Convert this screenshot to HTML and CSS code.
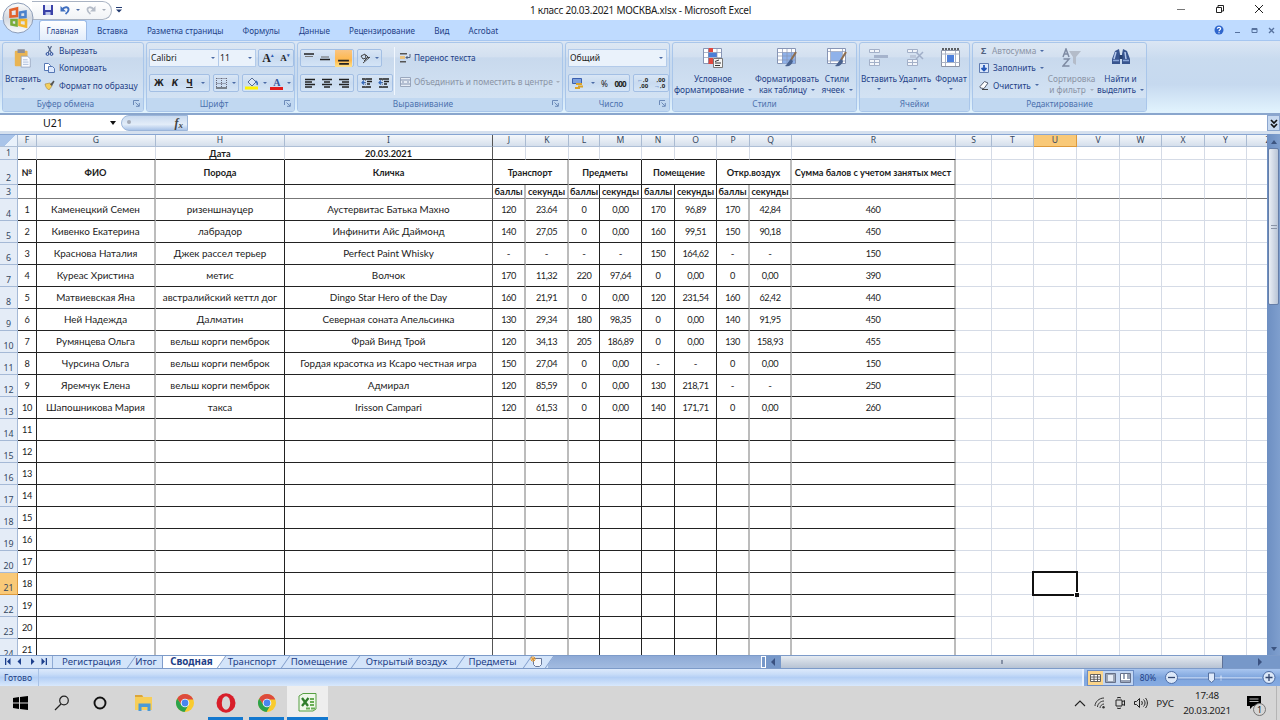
FILE: index.html
```html
<!DOCTYPE html>
<html lang="ru">

<head>
  <meta charset="utf-8">
  <title>1 класс 20.03.2021 МОСКВА.xlsx - Microsoft Excel</title>
  <link rel="stylesheet" href="styles.css">
</head>

<body>
  <svg class="defs" width="0" height="0">
    <symbol id="align-left" viewBox="0 0 12 12"><path d="M1 2.5h10M1 5h7M1 7.5h10M1 10h7" stroke="#222" stroke-width="1.5" /></symbol>
    <symbol id="align-center" viewBox="0 0 12 12"><path d="M1 2.5h10M3 5h6M1 7.5h10M3 10h6" stroke="#222" stroke-width="1.5" /></symbol>
    <symbol id="align-right" viewBox="0 0 12 12"><path d="M1 2.5h10M4 5h7M1 7.5h10M4 10h7" stroke="#222" stroke-width="1.5" /></symbol>
    <symbol id="indent" viewBox="0 0 12 12"><path d="M1 2h10M6 4.5h5M6 7h3M1 10h9" stroke="#222" stroke-width="1.3" /><path d="M5 5.7H1M3 3.5L1 5.7l2 2" stroke="#3668b8" stroke-width="1.2" fill="none" /><path d="M4.500 1v10" stroke="#777" stroke-dasharray="1 1" stroke-width=".8" /></symbol>
    <symbol id="launch" viewBox="0 0 7 7"><path d="M.5 5V.5H6M2.500 2.500L6 6M6.300 3v3.300H3" stroke="#6c8ab8" fill="none" /></symbol>
    <symbol id="chrome" viewBox="0 0 20 20">
      <circle cx="10" cy="10" r="9" fill="#f9cb2e" />
      <path d="M2.200 5.500A9 9 0 0 1 17.800 5.500L18.200 6.500H10L6.500 12z" fill="#dd4b3e" />
      <path d="M2.200 5.500A9 9 0 0 0 9.500 19L13.500 12 6.500 12z" fill="#2ba24c" />
      <circle cx="10" cy="10" r="4.300" fill="#fff" />
      <circle cx="10" cy="10" r="3.400" fill="#4a86ee" />
    </symbol>
  </svg>

  <header class="titlebar">
    <div class="quick">
      <svg width="12" height="12" viewBox="0 0 12 12"><path d="M1 1h10v10H1z" fill="#3a41a8" /><path d="M3 1h6v5H3z" fill="#e8ecfa" /><path d="M3.500 8h5v3h-5z" fill="#b9c2e8" /></svg>
      <svg width="10" height="10" viewBox="0 0 10 10"><path d="M2 4.500C5 1 9 2 8.500 5 8.300 7 7 8 5.500 9" stroke="#3f6fc0" stroke-width="2" fill="none" /><path d="M.5 1v5.500H6z" fill="#3f6fc0" /></svg>
      <i class="caret"></i>
      <svg width="10" height="10" viewBox="0 0 10 10"><path d="M8 4.500C5 1 1 2 1.500 5 1.700 7 3 8 4.500 9" stroke="#b5bcc8" stroke-width="1.800" fill="none" /><path d="M9.500 1v5.500H4z" fill="#b5bcc8" /></svg>
      <i class="caret pale"></i>
    </div>
    <svg class="more" width="6" height="6" viewBox="0 0 6 6"><path d="M0 .5h6" stroke="#223a70" /><path d="M0 2.500h6L3 5.500z" fill="#223a70" /></svg>
    <h1>1 класс 20.03.2021 МОСКВА.xlsx - Microsoft Excel</h1>
    <div class="window-buttons">
      <svg width="10" height="10" viewBox="0 0 10 10"><path d="M1 5.500h8" stroke="#777" /></svg>
      <svg width="10" height="10" viewBox="0 0 10 10"><path d="M1.500 3.500h5v5h-5zM3 3V1.500h5.500V7H7" stroke="#222" fill="none" /></svg>
      <svg width="10" height="10" viewBox="0 0 10 10"><path d="M1 1l8 8M9 1L1 9" stroke="#222" /></svg>
    </div>
  </header>

  <div class="office-button">
    <svg width="32" height="32" viewBox="0 0 32 32">
      <defs>
        <linearGradient id="orb" x1="0" y1="0" x2="0" y2="1">
          <stop offset="0" stop-color="#fdfdfd" /><stop offset=".5" stop-color="#d3d8e0" /><stop offset="1" stop-color="#fafcff" />
        </linearGradient>
      </defs>
      <circle cx="16" cy="16" r="15" fill="url(#orb)" stroke="#8d9db8" />
      <g fill="none" stroke-width="2.600">
        <path d="M8.500 8l6.500-1.500v7.500l-6.500.5z" stroke="#e2622c" />
        <path d="M18 10.500l5.500-1v5.500l-5.500.5z" stroke="#4c82cc" />
        <path d="M9.500 18l5 0v5.500l-5-1z" stroke="#79ac3a" />
        <path d="M17.500 18h6.500v6.500l-6.500-1.500z" stroke="#f3b52a" />
      </g>
    </svg>
  </div>

  <nav class="menu">
    <a class="active">Главная</a><a>Вставка</a><a>Разметка страницы</a><a>Формулы</a><a>Данные</a><a>Рецензирование</a><a>Вид</a><a>Acrobat</a>
    <div class="book-buttons">
      <svg width="10" height="10" viewBox="0 0 10 10"><circle cx="5" cy="5" r="4.500" fill="#2f66cd" /><path d="M3.300 3.800C3.500 1.800 6.700 2 6.600 3.800 6.500 4.800 5 4.800 5 6.200M5 7.200v1" stroke="#fff" stroke-width="1.200" fill="none" /></svg>
      <svg width="7" height="7" viewBox="0 0 7 7"><path d="M1 5.500h5" stroke="#57729e" /></svg>
      <svg width="7" height="7" viewBox="0 0 7 7"><path d="M1 1.500h5v4H1zM1 2.500h5" stroke="#57729e" fill="none" /></svg>
      <svg width="7" height="7" viewBox="0 0 7 7"><path d="M1 1l5 5M6 1L1 6" stroke="#57729e" stroke-width="1.300" /></svg>
    </div>
  </nav>

  <section class="ribbon">
    <div class="group clipboard">
      <div class="body">
        <button class="big">
          <svg width="20" height="22" viewBox="0 0 20 22"><rect x="1" y="3" width="14" height="17" rx="1" fill="#e9b452" /><path d="M4 1.500h8v4H4z" fill="#8c8e98" /><path d="M8 9h7l3 3v9H8z" fill="#f7faff" stroke="#8d9cb8" stroke-width=".8" /><path d="M10 13h5M10 15.500h6M10 18h6" stroke="#94a9cf" stroke-width=".8" /></svg>
          <span>Вставить</span><i class="caret"></i>
        </button>
        <div class="list">
          <button><svg width="11" height="10" viewBox="0 0 11 10"><path d="M4 0l3.500 7M7.500 0L4 7" stroke="#56688c" stroke-width="1.200" /><circle cx="3.500" cy="8" r="1.400" fill="none" stroke="#294a9a" /><circle cx="7.500" cy="8" r="1.400" fill="none" stroke="#294a9a" /></svg>Вырезать</button>
          <button><svg width="11" height="10" viewBox="0 0 11 10"><path d="M.5.500h4l2 2v5h-6z" fill="#fff" stroke="#5577b5" /><path d="M4.500 3.500h4l2 2v4h-6z" fill="#dbe7fb" stroke="#5577b5" /></svg>Копировать</button>
          <button><svg width="11" height="10" viewBox="0 0 11 10"><path d="M1 4l5-1 2 3-3 4C3 9 1.500 7 1 4z" fill="#f2cf5e" stroke="#a9853a" stroke-width=".6" /><path d="M6 4.500L9.500.5l1 1L8 6z" fill="#555" /></svg>Формат по образцу</button>
        </div>
      </div>
      <footer>Буфер обмена<svg><use href="#launch" /></svg></footer>
    </div>

    <div class="group font">
      <div class="body rows">
        <div class="line">
          <div class="combo name">Calibri<i class="caret"></i></div>
          <div class="combo size">11<i class="caret"></i></div>
          <div class="set grow"><b class="serif">A<sup>▴</sup></b><b class="serif small">A<sup>▾</sup></b></div>
        </div>
        <div class="line">
          <div class="set style"><b>Ж</b><b class="it">К</b><b class="un">Ч</b><i class="caret"></i></div>
          <div class="set borders"><svg width="11" height="11" viewBox="0 0 11 11"><path d="M.5.500h10M.5 5.500h10M.5 0v9M5.500 0v9M10.500 0v9" stroke="#667" stroke-dasharray="1 1" /><path d="M0 10h11" stroke="#222" /></svg><i class="caret"></i></div>
          <div class="set colors">
            <svg width="14" height="13" viewBox="0 0 14 13"><path d="M3 5l4-4 4 4-4 4z" fill="#dce7f6" stroke="#556b94" /><path d="M10.500 4c2 1 2 3 1.500 4" stroke="#3668b8" stroke-width="1.500" fill="none" /><path d="M0 9.500h13v3H0z" fill="#fff200" /></svg><i class="caret"></i>
            <span class="letter">A</span><i class="caret"></i>
          </div>
        </div>
      </div>
      <footer>Шрифт<svg><use href="#launch" /></svg></footer>
    </div>

    <div class="group align">
      <div class="body">
        <div class="rows left">
          <div class="line">
            <div class="set three">
              <svg width="12" height="12" viewBox="0 0 12 12"><path d="M1 2h10" stroke="#222" stroke-width="1.500" /><path d="M2 4.500h8" stroke="#777" /></svg>
              <svg width="12" height="12" viewBox="0 0 12 12"><path d="M2 5h8" stroke="#666" /><path d="M1 7.500h10" stroke="#222" stroke-width="1.500" /></svg>
              <svg class="on" width="12" height="12" viewBox="0 0 12 12"><path d="M1 8h10M2 11h9" stroke="#222" stroke-width="1.500" /></svg>
            </div>
            <div class="set turn"><svg width="12" height="12" viewBox="0 0 12 12"><path d="M1 4l4-2 1 4-3 1zM4 9l4-4M6 3l3 3M3 11l7-6" stroke="#444" fill="none" /></svg><i class="caret"></i></div>
          </div>
          <div class="line">
            <div class="set three">
              <svg width="12" height="12"><use href="#align-left" /></svg>
              <svg width="12" height="12"><use href="#align-center" /></svg>
              <svg width="12" height="12"><use href="#align-right" /></svg>
            </div>
            <div class="set two">
              <svg width="12" height="12"><use href="#indent" /></svg>
              <svg width="12" height="12"><use href="#indent" /></svg>
            </div>
          </div>
        </div>
        <div class="wrap">
          <button><svg width="11" height="10" viewBox="0 0 11 10"><path d="M0 .7h7M0 8.700h6" stroke="#555" stroke-width="1.400" /><path d="M0 3h5v3H0z" fill="#eac27e" /><path d="M6 4.500h4V1M7.500 3L6 4.500 7.500 6" stroke="#4f607e" fill="none" /></svg>Перенос текста</button>
          <button class="off"><svg width="11" height="10" viewBox="0 0 11 10"><path d="M.5.500h10v9H.5z" fill="#e6ecf5" stroke="#9aa7bd" /><path d="M.5 3h10M.5 7h10M2 5h2M7 5h2" stroke="#8393b0" /></svg>Объединить и поместить в центре<i class="caret pale"></i></button>
        </div>
      </div>
      <footer>Выравнивание<svg><use href="#launch" /></svg></footer>
    </div>

    <div class="group number">
      <div class="body rows">
        <div class="line"><div class="combo">Общий<i class="caret"></i></div></div>
        <div class="line">
          <div class="set money"><svg width="12" height="11" viewBox="0 0 12 11"><path d="M.5.500h9v5h-9z" fill="#7ea0dd" stroke="#3b5fae" /><path d="M4 6h6M6 8.500h5M3 10h5" stroke="#dba32b" stroke-width="1.800" /></svg><i class="caret"></i><span>%</span><span class="thousands">000</span></div>
          <div class="set digits"><span><i>←</i>,0<br>,00</span><span>,00<br><i>→</i>,0</span></div>
        </div>
      </div>
      <footer>Число<svg><use href="#launch" /></svg></footer>
    </div>

    <div class="group styles">
      <div class="body">
        <button class="big">
          <svg width="20" height="20" viewBox="0 0 20 20"><path d="M.5.500h18v15H.5z" fill="#fff" stroke="#8795b5" /><path d="M5 0h5v4H5zM5 10h5v6H5z" fill="#e0473e" /><path d="M5 4.500h9v4.500H5z" fill="#4a7ed8" /><path d="M.5 4.500h18M.5 9.500h18M5.500 0v15.500M14 0v15.500" stroke="#8795b5" stroke-width=".7" /><path d="M10.500 10.500h9v9h-9z" fill="#f5f5f5" stroke="#777" /><path d="M12 13.500l4-1.500M12 15h6M12 17.500h5" stroke="#333" /></svg>
          <span>Условное</span><span>форматирование<i class="caret"></i></span>
        </button>
        <button class="big">
          <svg width="20" height="20" viewBox="0 0 20 20"><path d="M.5.500h18v15H.5z" fill="#fff" stroke="#8795b5" /><path d="M5 4.500h13v11H5z" fill="#8fb2ea" /><path d="M.5 4.500h18M.5 8h18M.5 12h18M5.500 0v15.500M10 0v15.500M14.500 0v15.500" stroke="#8795b5" stroke-width=".7" /><path d="M19 4l-5 8" stroke="#8e6e4e" stroke-width="2" /><path d="M14 11l2 2c-1 4-4 6-8 5 3-2 3-5 6-7z" fill="#49628e" /></svg>
          <span>Форматировать</span><span>как таблицу<i class="caret"></i></span>
        </button>
        <button class="big">
          <svg width="20" height="20" viewBox="0 0 20 20"><path d="M.5.500h18v15H.5z" fill="#fff" stroke="#8795b5" /><path d="M4 4h11v9H4z" fill="#8fb2ea" /><path d="M.5 3.500h18M.5 13h18M3.500 0v15.500M15.500 0v15.500" stroke="#8795b5" stroke-width=".7" /><path d="M19 4l-5 8" stroke="#8e6e4e" stroke-width="2" /><path d="M14 11l2 2c-1 4-4 6-8 5 3-2 3-5 6-7z" fill="#49628e" /></svg>
          <span>Стили</span><span>ячеек<i class="caret"></i></span>
        </button>
      </div>
      <footer>Стили</footer>
    </div>

    <div class="group cells">
      <div class="body">
        <button class="big">
          <svg width="20" height="20" viewBox="0 0 20 20"><path d="M.5 1.500h10v3H.5zM.5 11.500h10v6H.5zM.5 14.500h10M5.500 1.500v3M5.500 11.500v6" fill="#f2f5fa" stroke="#a3b0c8" /><path d="M5 7h14v3H5z" fill="#a5b3cc" /></svg>
          <span>Вставить</span><i class="caret"></i>
        </button>
        <button class="big">
          <svg width="20" height="20" viewBox="0 0 20 20"><path d="M2.500 1.500h10v3h-10zM2.500 11.500h10v6h-10zM2.500 14.500h10M7.500 1.500v3M7.500 11.500v6" fill="#f2f5fa" stroke="#a3b0c8" /><path d="M5 7h6v3H5z" fill="#bcc7da" /><path d="M11 4l7 7M18 4l-7 7" stroke="#a0aec8" stroke-width="1.500" /></svg>
          <span>Удалить</span><i class="caret"></i>
        </button>
        <button class="big">
          <svg width="22" height="20" viewBox="0 0 22 20"><path d="M1.500 2.500h18v16h-18z" fill="#fff" stroke="#8b93a5" /><path d="M2 1h17" stroke="#333" stroke-width="1.500" stroke-dasharray="2 1" /><path d="M1.500 6h18M1.500 14.500h18M5.500 3v15M15.500 3v15" stroke="#aab3c6" /><path d="M7 7h7v7H7z" fill="#4d80dc" /></svg>
          <span>Формат</span><i class="caret"></i>
        </button>
      </div>
      <footer>Ячейки</footer>
    </div>

    <div class="group edit">
      <div class="body">
        <div class="list">
          <button class="off"><b class="sigma">Σ</b>Автосумма<i class="caret"></i></button>
          <button><svg width="10" height="10" viewBox="0 0 10 10"><path d="M.5.500h9v9h-9z" fill="#dce8fb" stroke="#5f7bb0" /><path d="M5 2v5M2.500 5L5 7.500 7.500 5" stroke="#2457b8" stroke-width="1.800" fill="none" /></svg>Заполнить<i class="caret"></i></button>
          <button><svg width="10" height="10" viewBox="0 0 10 10"><path d="M1 6.500L5.500 1.500 9 3 5 8.500 1.500 8z" fill="#fff" stroke="#555e70" /><path d="M3 9.500h6" stroke="#444" /></svg>Очистить<i class="caret"></i></button>
        </div>
        <button class="big off">
          <svg width="20" height="20" viewBox="0 0 20 20"><path d="M7 3h12l-5 6v8l-3-2V9z" fill="#b4bcc9" /><path d="M1 9l3-8 3 8M2 6h4M1.500 11h5.500l-6 7h6.500" stroke="#7e8ba3" stroke-width="1.500" fill="none" /></svg>
          <span>Сортировка</span><span>и фильтр<i class="caret pale"></i></span>
        </button>
        <button class="big">
          <svg width="20" height="20" viewBox="0 0 20 20"><path d="M4 3l4-2 1 5v10H1v-5zM16 3l-4-2-1 5v10h8v-5z" fill="#38558f" /><path d="M8.500 7h3v4h-3z" fill="#27406f" /><path d="M5 4L3 11M14 4l1 7" stroke="#b4c8ec" stroke-width="1.500" /><path d="M2 12.500h6M12 12.500h6" stroke="#8aa6d8" stroke-width="1.500" /></svg>
          <span>Найти и</span><span>выделить<i class="caret"></i></span>
        </button>
      </div>
      <footer>Редактирование</footer>
    </div>
  </section>

  <div class="formula">
    <div class="name-box">U21<i class="caret"></i></div>
    <div class="fx"><span class="dot"></span><i>f<sub>x</sub></i></div>
    <div class="expand"><svg width="8" height="10" viewBox="0 0 8 10"><path d="M1 1l3 3 3-3M1 5l3 3 3-3" stroke="#111" stroke-width="1.700" fill="none" /></svg></div>
  </div>

  <main class="sheet">
    <div class="viewport">
      <table id="grid"></table>
      <div class="cursor"></div>
    </div>
    <div class="vscroll">
      <i class="up"></i>
      <div class="thumb"></div>
      <i class="down"></i>
    </div>
  </main>

  <div class="tabs">
    <div class="nav">
      <svg width="7" height="7" viewBox="0 0 7 7"><path d="M1 0h1.300v7H1zM6.500 0v7L3 3.500z" /></svg>
      <svg width="7" height="7" viewBox="0 0 7 7"><path d="M5 0v7L1.500 3.500z" /></svg>
      <svg width="7" height="7" viewBox="0 0 7 7"><path d="M2 0v7l3.500-3.500z" /></svg>
      <svg width="7" height="7" viewBox="0 0 7 7"><path d="M4.700 0H6v7H4.700zM.5 0v7L4 3.500z" /></svg>
    </div>
    <a class="t1"><span>Регистрация</span></a><a class="t2"><span>Итог</span></a><a class="t3 current"><span>Сводная</span></a><a class="t4"><span>Транспорт</span></a><a class="t5"><span>Помещение</span></a><a class="t6"><span>Открытый воздух</span></a><a class="t7"><span>Предметы</span></a>
    <a class="t8"><svg width="13" height="11" viewBox="0 0 13 11"><path d="M3.500 2.500h8v6l-2 2h-4l-2-2z" fill="#f4f7fc" stroke="#67779a" /><path d="M3 0v6M0 3h6M1 1l4 4M5 1L1 5" stroke="#e8992c" /></svg></a>
    <div class="hscroll">
      <div class="split"></div>
      <i class="left"></i>
      <div class="thumb"></div>
      <i class="right"></i>
    </div>
  </div>

  <div class="status">
    <span class="ready">Готово</span>
    <div class="tools">
      <div class="views">
        <svg class="on" width="15" height="14" viewBox="0 0 15 14"><path d="M2.500 3.500h10v7h-10zM2.500 6h10M2.500 8.300h10M6 3.500v7M9.500 3.500v7" fill="#fff" stroke="#555" stroke-width=".9" /></svg>
        <svg width="15" height="14" viewBox="0 0 15 14"><path d="M2.500 2.500h10v9h-10z" fill="#9ca5b5" stroke="#66718a" /><path d="M5 4h5v6H5z" fill="#e5ebf5" /></svg>
        <svg width="15" height="14" viewBox="0 0 15 14"><path d="M2.500 2.500h10v9h-10z" fill="#fff" stroke="#66718a" /><path d="M5 3h2v5H5zM9 3h3v5H9zM3 9h9v2H3z" fill="#9aa4b8" /></svg>
      </div>
      <span class="percent">80%</span>
      <svg class="zoom" width="114" height="16" viewBox="0 0 114 16">
        <path d="M14 8h84M57 5.500v5" stroke="#e9f1ff" />
        <path d="M14 9h84" stroke="#5878b5" stroke-width=".6" />
        <circle cx="7.500" cy="7.500" r="6" fill="#dce8f8" stroke="#4c6ca5" /><path d="M4 7.500h7" stroke="#33466e" stroke-width="1.300" />
        <circle cx="105" cy="7.500" r="6" fill="#dce8f8" stroke="#4c6ca5" /><path d="M101.500 7.500h7M105 4v7" stroke="#33466e" stroke-width="1.300" />
        <path d="M44.500 3h6v7l-3 2.500-3-2.500z" fill="#dfeafa" stroke="#55709f" />
      </svg>
    </div>
  </div>

  <div class="taskbar">
    <div class="apps">
      <a><svg width="15" height="14" viewBox="0 0 15 14"><path d="M0 2l6-.9v5.500H0zM7 1l8-1v6.600H7zM0 7.400h6v5.500L0 12zM7 7.400h8V14l-8-1z" /></svg></a>
      <a><svg width="16" height="16" viewBox="0 0 16 16"><circle cx="10" cy="5.500" r="4.300" fill="none" stroke="#222" stroke-width="1.200" /><path d="M7 9l-6 6" stroke="#222" stroke-width="1.300" /></svg></a>
      <a class="cortana"><svg width="14" height="14" viewBox="0 0 14 14"><circle cx="7" cy="7" r="5.500" fill="none" stroke="#111" stroke-width="1.900" /></svg></a>
      <a><svg width="20" height="18" viewBox="0 0 20 18"><path d="M1 1h7l1.500 2H18v13H1z" fill="#f7ce58" /><path d="M1 1h7l1 2H1z" fill="#dba53a" /><path d="M4.500 17V9.500h12V17h-3v-4h-6v4z" fill="#4a9ad6" /></svg></a>
      <a><svg width="20" height="20"><use href="#chrome" /></svg></a>
      <a class="open"><svg width="20" height="20" viewBox="0 0 20 20"><ellipse cx="10" cy="10" rx="9.500" ry="9.700" fill="#d81e2a" /><ellipse cx="10" cy="10" rx="4.200" ry="6.700" fill="#d6d6d6" /></svg></a>
      <a class="open"><svg width="20" height="20"><use href="#chrome" /></svg></a>
      <a class="open front"><svg width="20" height="19" viewBox="0 0 20 19"><path d="M1 3l4-2.500h13V16l-3 2H1z" fill="#eef7ea" stroke="#57a043" /><path d="M4 5l6 8M10.500 5L4 13" stroke="#2f7d2b" stroke-width="2.300" /><path d="M12 6h5M12 9h5M12 12h5M8 15.500h9" stroke="#69ae55" stroke-width="1.800" stroke-dasharray="4 1" /></svg></a>
    </div>
    <div class="tray">
      <svg width="12" height="8" viewBox="0 0 12 8"><path d="M1 7l5-5 5 5" stroke="#222" stroke-width="1.100" fill="none" /></svg>
      <svg width="12" height="12" viewBox="0 0 12 12"><path d="M1 9C1 5 5 1 10 1M3.500 10C3.500 7 6.500 4 10 4M6 11c0-2 2-4 4-4" stroke="#333" fill="none" /><circle cx="9.500" cy="10.300" r="1.200" fill="#333" /></svg>
      <svg width="12" height="12" viewBox="0 0 12 12"><path d="M2 3h6v6H2zM8 5l2.500-1.500v5L8 7M3 1c1-.7 3-.7 4 0M3 11c1 .7 3 .7 4 0" stroke="#222" fill="none" /></svg>
      <svg width="14" height="12" viewBox="0 0 14 12"><path d="M.5 4.500h2l3-3v9l-3-3h-2zM7.500 4c1 1 1 3 0 4M9.500 2.500c2 2 2 5 0 7M11.500 1c2.500 3 2.500 7 0 10" stroke="#222" fill="none" /></svg>
      <span class="lang">РУС</span>
      <div class="clock"><span>17:48</span><span>20.03.2021</span></div>
      <div class="notify">
        <svg width="14" height="13" viewBox="0 0 14 13"><path d="M0 0h14v10H6l-3 3v-3H0z" /><path d="M2.500 3h9M2.500 5.500h9" stroke="#ccc" stroke-width=".9" /></svg>
        <span>1</span>
      </div>
    </div>
  </div>

  <script src="grid.js"></script>
</body>

</html>
```
FILE: styles.css
```css
:root {
  --text: #1e3f87;
  --grid: #d5dbe6;
  --soft: #bcbcbc;
  --ui: "Noto Sans", "Open Sans", sans-serif;
  --cell: Lato, "Open Sans", sans-serif;
}

* {
  box-sizing: border-box;
}

body {
  width: 1280px;
  height: 720px;
  margin: 0;
  overflow: hidden;
  position: relative;
  display: flex;
  flex-direction: column;
  background: #fff;
  font: 8.3px/11px var(--ui);
  color: var(--text);
}

svg {
  display: block;
  flex: none;
}

.defs {
  position: absolute;
}

button {
  border: 0;
  padding: 0;
  background: none;
  font: inherit;
  color: inherit;
  white-space: nowrap;
}

.caret {
  flex: none;
  width: 0;
  height: 0;
  border: 2px solid transparent;
  border-top: 2.5px solid #4b6ba5;
  border-bottom: 0;
}

.caret.pale {
  border-top-color: #a6adb9;
}

/* title */
.titlebar {
  height: 20px;
  display: flex;
  align-items: center;
  position: relative;
}

.quick {
  width: 80px;
  height: 19px;
  margin-left: 32px;
  padding-left: 10px;
  display: flex;
  align-items: center;
  gap: 6px;
  border: 1px solid #a9b3c3;
  border-left: 0;
  border-radius: 0 10px 10px 0;
  background: linear-gradient(#fff, #f1f3f6);
}

.more {
  margin-left: 4px;
}

.titlebar h1 {
  width: 221px;
  margin: 0 0 0 408px;
  font: 10px/20px var(--ui);
  letter-spacing: -0.25px;
  color: #1c1c1c;
  white-space: nowrap;
}

.window-buttons {
  margin: 0 16px 2px auto;
  display: flex;
  gap: 29px;
}

.office-button {
  position: absolute;
  left: 2px;
  top: 2px;
}

/* menu */
.menu {
  height: 20px;
  padding-left: 39px;
  display: flex;
  background: #bfdbff;
  font-size: 8.1px;
}

.menu a {
  height: 20px;
  padding: 0 8px;
  margin-right: 3.2px;
  line-height: 22px;
  white-space: nowrap;
}

.menu .active {
  width: 48px;
  padding: 0 6.5px;
  margin-right: 2px;
  border: 1px solid #9dbbe6;
  border-bottom: 0;
  border-radius: 3px 3px 0 0;
  background: linear-gradient(#fff, #e2edfb);
  line-height: 20px;
}

.book-buttons {
  margin: 0 5px 0 auto;
  display: flex;
  align-items: center;
  gap: 10px;
}

/* ribbon */
.ribbon {
  height: 75px;
  padding: 1px 2px 3px;
  display: flex;
  gap: 2px;
  border-top: 1px solid #a6c6f0;
  border-bottom: 2px solid #8aa6cd;
  background: linear-gradient(#dbe6f4, #c9dbef 25%, #c6d9ef 60%, #e0f2fd 97%);
}

.group {
  height: 70px;
  display: flex;
  flex-direction: column;
  border: 1px solid #a9c6ea;
  border-radius: 3px;
  background: linear-gradient(#dde7f3, #d3e0f0 20%, #c8d9ed 22%, #d6e5f5);
  overflow: hidden;
}

.group .body {
  flex: 1;
  display: flex;
}

.group footer {
  height: 13px;
  position: relative;
  background: #c1d8f1;
  color: #4d72ae;
  text-align: center;
  line-height: 12px;
}

.group footer svg {
  position: absolute;
  right: 3px;
  top: 2px;
  width: 7px;
  height: 7px;
}

.clipboard footer { padding-right: 15px; }
.font footer,
.number footer { padding-right: 13px; }
.align footer { padding-right: 14px; }

.clipboard { width: 142px; }
.font { width: 149px; }
.align { width: 266px; }
.number { width: 105px; }
.styles { width: 185px; }
.cells { width: 111px; }
.edit { width: 175px; }

.big {
  padding-top: 5px;
  display: flex;
  flex-direction: column;
  align-items: center;
}

.big svg {
  margin-bottom: 5px;
  height: 20px;
}

.big > span {
  display: flex;
  align-items: center;
  gap: 4px;
}

.big > .caret {
  margin-top: 4px;
}

.off {
  color: #8b94a5;
}

.list {
  display: flex;
  flex-direction: column;
}

.list button {
  height: 17.4px;
  margin-top: -0.1px;
  display: flex;
  align-items: center;
  gap: 4px;
}

.list button:first-child {
  margin-top: -1px;
}

.clipboard .big { width: 40px; }
.clipboard .list { padding-left: 1px; }

.rows {
  display: flex;
  flex-direction: column;
  gap: 7px;
}

.group .rows {
  padding: 6px 0 0 2px;
}

.group .body.rows {
  flex-direction: column;
}

.group .left {
  padding-left: 2px;
}

.line {
  height: 18px;
  display: flex;
  gap: 3px;
}

.combo {
  width: 99px;
  height: 18px;
  padding: 0 3px 0 1px;
  display: flex;
  align-items: center;
  justify-content: space-between;
  border: 1px solid #b3cbea;
  background: #eaf2fb;
  color: #222;
  font-size: 8.6px;
}

.combo.name { width: 70px; margin-right: -4px; }
.combo.size { width: 38px; }

.set {
  height: 18px;
  display: flex;
  align-items: center;
  justify-content: space-around;
  border: 1px solid #a3bfe4;
  border-radius: 2px;
  background: linear-gradient(#d9e6f5, #c9dbf0 50%, #d4e4f6);
  color: #222;
}

.grow { width: 36px; margin-left: -1px; }
.style { width: 62px; }
.borders { width: 27px; }
.colors { width: 53px; }
.three { width: 54px; }
.turn { width: 25px; }
.two { width: 36px; }
.money { width: 62px; }
.digits { width: 36px; font: bold 6px/6px var(--ui); }

.digits i {
  color: #2d5ab0;
  font-style: normal;
}

.digits span:last-child,
.digits span:first-child {
  text-align: right;
}

.thousands {
  font-weight: bold;
  font-size: 8px;
  letter-spacing: -0.8px;
}

.serif {
  font: bold 12px "Liberation Serif", serif;
}

.serif.small {
  font-size: 9px;
}

.serif sup {
  font-size: 5px;
  line-height: 0;
  color: #2d5ab0;
}

.style b {
  font-family: "DejaVu Sans", sans-serif;
  font-size: 8px;
}

.it {
  font-style: italic;
}

.un {
  text-decoration: underline;
}

.letter {
  width: 13px;
  height: 13px;
  border-bottom: 3px solid #e31b1b;
  color: #34579b;
  font: bold 10px/11px "Liberation Serif", serif;
  text-align: center;
}

.three svg {
  margin: 0 1px;
}

.three .on {
  width: 17px;
  height: 17px;
  padding: 2px;
  margin: 0;
  background: linear-gradient(#f9c583, #ffb74a 60%, #ffe28a);
}

.wrap {
  margin: 4px 0 0 1px;
  padding-left: 5px;
  display: flex;
  flex-direction: column;
  gap: 3px;
  height: 48px;
  border-left: 1px solid #f1f7fe;
}

.wrap button {
  height: 21px;
  display: flex;
  align-items: center;
  gap: 3px;
}

.styles .big:nth-child(1) { width: 80px; }
.styles .big:nth-child(2) { width: 68px; }
.styles .big:nth-child(3) { width: 32px; }
.cells .body { padding-left: 1px; }
.cells .big { width: 36px; }
.edit .list { width: 73px; padding-left: 6px; }
.edit .big:nth-child(2) { width: 51px; }
.edit .big:nth-child(3) { width: 47px; }

.sigma {
  width: 9px;
  color: #50617f;
  font-size: 9px;
}

/* formula bar */
.formula {
  height: 19px;
  display: flex;
  border-bottom: 3px solid #d5e0ee;
}

.name-box {
  width: 121px;
  height: 16px;
  padding: 0 5px 0 43px;
  display: flex;
  align-items: center;
  justify-content: space-between;
  color: #111;
  font-size: 10.6px;
}

.name-box .caret {
  border-width: 3px 3px 0;
  border-top: 4px solid #111;
}

.fx {
  width: 67px;
  height: 16px;
  padding: 0 4px 0 5px;
  display: flex;
  justify-content: space-between;
  align-items: center;
  border: 1px solid #9cb6da;
  border-radius: 8px 0 0 8px;
  background: linear-gradient(#c9daef, #e3edf9 60%, #a9c3e8);
  color: #444;
  font: bold 12px/14px "Liberation Serif", serif;
}

.fx sub {
  font-size: 9px;
  line-height: 0;
  vertical-align: -1px;
}

.dot {
  width: 4px;
  height: 4px;
  margin-top: -3px;
  border-radius: 50%;
  background: #a4abb8;
}

.expand {
  width: 13px;
  height: 16px;
  margin-left: auto;
  padding: 3px 0 0 2px;
  border: 1px solid #8ba6cf;
  background: #c7d9f0;
}

/* worksheet */
.sheet {
  height: 521px;
  display: flex;
}

.viewport {
  width: 1267px;
  position: relative;
  overflow: hidden;
  border-top: 1px solid #87a5d2;
}

table {
  width: 1290px;
  table-layout: fixed;
  border-collapse: separate;
  border-spacing: 0;
  color: #1b1b1b;
  font: 9.9px/11px var(--cell);
}

td,
th {
  padding: 0;
  overflow: hidden;
  white-space: nowrap;
  text-align: center;
  vertical-align: middle;
  border-right: 1px solid var(--grid);
  border-bottom: 1px solid var(--grid);
}

td.b {
  border-color: #222;
}

td.top {
  border-bottom-color: #222;
}

td.soft {
  border-right: 2px solid var(--soft);
}

td.bold {
  font-weight: bold;
  font-size: 9.2px;
}

td.num {
  font-size: 9.2px;
  letter-spacing: -0.45px;
}

tr .freeze {
  border-right-color: #555;
}

.r3 td {
  border-bottom-color: #777;
}

thead th {
  height: 12px;
  background: linear-gradient(#f5f8fb, #d5dfec);
  border-right-color: #aabbd2;
  border-bottom: 1px solid #aebfd6;
  color: #35475f;
  font: 8.6px/11px var(--ui);
}

tbody th {
  vertical-align: bottom;
  background: #e4ecf7;
  border-color: #a5b9d6;
  color: #35475f;
  font: 8.8px/11px var(--ui);
}

th.corner {
  background: linear-gradient(135deg, #a9c4e9 55%, #e9f1fb 56%);
}

th.active {
  background: #f9c978;
  border-color: #dd9a3c;
}

.cursor {
  position: absolute;
  left: 1032px;
  top: 436px;
  width: 46px;
  height: 25px;
  border: 2px solid #111;
}

.cursor::after {
  content: "";
  position: absolute;
  right: -3px;
  bottom: -3px;
  width: 4px;
  height: 4px;
  background: #111;
  border: solid #fff;
  border-width: 1px 0 0 1px;
}

.vscroll {
  width: 13px;
  display: flex;
  flex-direction: column;
  align-items: center;
  background: linear-gradient(90deg, #6d8fc2, #7f9fce);
}

.vscroll .up,
.vscroll .down {
  margin: 6px 0 4px;
  border: 3.5px solid transparent;
  border-top: 0;
  border-bottom: 4px solid #3d5581;
}

.vscroll .down {
  margin-top: auto;
  border-top: 4px solid #3d5581;
  border-bottom: 0;
}

.vscroll .thumb {
  width: 11px;
  height: 157px;
  border: 1px solid #657ea8;
  border-radius: 2px;
  background: linear-gradient(#8a94a6 1px, transparent 1px 3px, #8a94a6 3px) center / 6px 4px no-repeat, linear-gradient(90deg, #e9eef5, #b8c4d6);
}

/* sheet tabs */
.tabs {
  height: 14px;
  display: flex;
  border-top: 1px solid #7d9bc9;
  border-bottom: 1px solid #7d9bc9;
  background: linear-gradient(#8eaad6, #a2bbe0);
  font-size: 9.6px;
}

.nav {
  width: 53px;
  padding: 2px 4px 0;
  display: flex;
  justify-content: space-between;
  background: #d6e5f9;
  border-right: 1px solid #8fabd5;
  fill: #1d3f8c;
}

.tabs a {
  position: relative;
  background: #d3e4fa;
  line-height: 12px;
  text-align: center;
  white-space: nowrap;
}

.tabs a::after {
  content: "";
  position: absolute;
  z-index: 1;
  right: -2px;
  top: 0;
  width: 7px;
  height: 12px;
  border-right: 1px solid #7f9ccb;
  background: #d3e4fa;
  transform: skewX(-35deg);
}

.tabs a span,
.tabs a svg {
  position: relative;
  z-index: 2;
}

.t1 { width: 77px; }
.t2 { width: 33px; }
.t3 { width: 57px; }
.t4 { width: 64px; }
.t5 { width: 70px; }
.t6 { width: 105px; }
.t7 { width: 67px; }
.t8 { width: 22px; padding-left: 4px; }

.tabs .t2 {
  border-right: 1px solid #7f9ccb;
}

.tabs .t2::after {
  display: none;
}

.tabs .current,
.tabs .current::after {
  background: #fff;
}

.tabs .current {
  font-weight: bold;
  font-size: 9.8px;
}

.hscroll {
  width: 519px;
  margin-left: auto;
  display: flex;
  align-items: center;
  background: #7798c9;
}

.split {
  width: 5px;
  height: 12px;
  border: 1px solid #fff;
  background: #7798c9;
}

.hscroll .left,
.hscroll .right {
  border: 4px solid transparent;
  border-right: 4px solid #3a5180;
  border-left: 0;
  margin: 0 6px 0 5px;
}

.hscroll .right {
  border-left: 4px solid #3a5180;
  border-right: 0;
  margin: 0 0 0 35px;
}

.hscroll .thumb {
  width: 442px;
  height: 12px;
  border-right: 1px solid #5f7297;
  background: linear-gradient(#8590a5, #8590a5) center / 2px 4px no-repeat, linear-gradient(#e6ebf2, #d0d8e3 45%, #b7c3d4);
}

/* status bar */
.status {
  height: 17px;
  display: flex;
  background: linear-gradient(#dce9fb, #c9ddf8 30%, #b4cff5 50%, #d8e8fc);
}

.ready {
  width: 39px;
  padding-left: 4px;
  line-height: 18px;
  font-size: 8.6px;
  border-right: 1px solid #a9c2e6;
}

.tools {
  width: 198px;
  margin-left: auto;
  padding-left: 3px;
  display: flex;
  align-items: center;
  border-left: 2px solid #e8f1fd;
  background: linear-gradient(#a9c6f0, #7ea5dd 50%, #86abe2);
}

.views {
  width: 47px;
  display: flex;
  border: 1px solid #6b8cc4;
  background: #c1d5f2;
}

.views .on {
  background: #fbd58b;
}

.percent {
  width: 28px;
  text-align: center;
  margin-right: 2px;
}

/* taskbar */
.taskbar {
  height: 34px;
  display: flex;
  background: #d6d6d6;
  color: #1d1d1d;
}

.apps {
  display: flex;
}

.apps a {
  width: 41px;
  display: flex;
  align-items: center;
  justify-content: center;
  border-bottom: 3px solid transparent;
  padding-top: 2px;
}

.apps .cortana {
  padding-right: 5px;
}

.apps .open {
  width: 35px;
  margin: 0 3px;
  border-color: #1378cf;
}

.apps .front {
  width: 41px;
  margin: 0;
  background: #eee;
}

.tray {
  margin-left: auto;
  padding-right: 3px;
  display: flex;
  align-items: center;
  gap: 8px;
  font-size: 10px;
}

.lang {
  font-size: 9.8px;
}

.clock {
  width: 50px;
  display: flex;
  flex-direction: column;
  align-items: center;
  line-height: 15px;
  font-size: 9.8px;
  letter-spacing: -0.25px;
}

.notify {
  width: 37px;
  height: 34px;
  padding: 10px 0 0 7px;
  position: relative;
  border-right: 1px solid #b5b5b5;
}

.notify span {
  position: absolute;
  left: 13px;
  top: 17px;
  width: 13px;
  height: 13px;
  border: 1px solid #777;
  border-radius: 50%;
  background: #d6d6d6;
  font-size: 9px;
  line-height: 11px;
  text-align: center;
}
```
FILE: grid.js
```js
const cols = [
  ['', 18], ['F', 19], ['G', 119], ['H', 129], ['I', 208], ['J', 33], ['K', 43], ['L', 31], ['M', 42], ['N', 33],
  ['O', 42], ['P', 33], ['Q', 42], ['R', 164], ['S', 36], ['T', 42], ['U', 43], ['V', 43], ['W', 42], ['X', 43],
  ['Y', 42], ['Z', 43]
];

const results = [
  ['Каменецкий Семен', 'ризеншнауцер', 'Аустервитас Батька Махно', '120', '23.64', '0', '0,00', '170', '96,89', '170', '42,84', '460'],
  ['Кивенко Екатерина', 'лабрадор', 'Инфинити Айс Даймонд', '140', '27,05', '0', '0,00', '160', '99,51', '150', '90,18', '450'],
  ['Краснова Наталия', 'Джек рассел терьер', 'Perfect Paint Whisky', '-', '-', '-', '-', '150', '164,62', '-', '-', '150'],
  ['Куреас Христина', 'метис', 'Волчок', '170', '11,32', '220', '97,64', '0', '0,00', '0', '0,00', '390'],
  ['Матвиевская Яна', 'австралийский кеттл дог', 'Dingo Star Hero of the Day', '160', '21,91', '0', '0,00', '120', '231,54', '160', '62,42', '440'],
  ['Ней Надежда', 'Далматин', 'Северная соната Апельсинка', '130', '29,34', '180', '98,35', '0', '0,00', '140', '91,95', '450'],
  ['Румянцева Ольга', 'вельш корги пемброк', 'Фрай Винд Трой', '120', '34,13', '205', '186,89', '0', '0,00', '130', '158,93', '455'],
  ['Чурсина Ольга', 'вельш корги пемброк', 'Гордая красотка из Ксаро честная игра', '150', '27,04', '0', '0,00', '-', '-', '0', '0,00', '150'],
  ['Яремчук Елена', 'вельш корги пемброк', 'Адмирал', '120', '85,59', '0', '0,00', '130', '218,71', '-', '-', '250'],
  ['Шапошникова Мария', 'такса', 'Irisson Campari', '120', '61,53', '0', '0,00', '140', '171,71', '0', '0,00', '260']
];

const pair = ['баллы', 'секунды'];
const soft = ['G', 'J', 'K', 'P', 'Q', 'R'];
const table = document.getElementById('grid');

// text and colspan of every cell between F and R
function rowCells(n) {
  if (n === 1) return ['', '', 'Дата', '20.03.2021'].concat(Array(9).fill(''));
  if (n === 2) {
    return ['№', 'ФИО', 'Порода', 'Кличка', ['Транспорт', 2], ['Предметы', 2], ['Помещение', 2],
      ['Откр.воздух', 2], 'Сумма балов с учетом занятых мест'];
  }
  if (n === 3) return ['', '', '', ''].concat(pair, pair, pair, pair, ['']);
  return [String(n - 3)].concat(results[n - 4] || Array(12).fill(''));
}

function height(n) {
  return { 1: 13, 2: 25, 3: 14 }[n] || 22;
}

let html = '<colgroup>' + cols.map(c => `<col style="width:${c[1]}px">`).join('') + '</colgroup>';

html += '<thead><tr>' + cols.map((c, i) => {
  const cls = i === 0 ? 'corner' : c[0] === 'U' ? 'active' : c[0] === 'I' ? 'freeze' : '';
  return `<th class="${cls}">${c[0]}</th>`;
}).join('') + '</tr></thead><tbody>';

for (let n = 1; n <= 24; n++) {
  html += `<tr class="r${n}" style="height:${height(n)}px"><th class="${n === 21 ? 'active' : ''}">${n}</th>`;
  let at = 1;
  for (const cell of rowCells(n)) {
    const [text, span] = Array.isArray(cell) ? cell : [cell, 1];
    at += span;
    const name = cols[at - 1][0];
    const cls = [n > 1 ? 'b' : 'top'];
    if (n > 1 && soft.includes(name)) cls.push('soft');
    if (n < 4) cls.push('bold');
    else if (/^[\d.,]+$/.test(text)) cls.push('num');
    if (name === 'I') cls.push('freeze');
    html += `<td class="${cls.join(' ')}" colspan="${span}">${text}</td>`;
  }
  html += '<td></td>'.repeat(cols.length - at) + '</tr>';
}

table.innerHTML = html + '</tbody>';
```
